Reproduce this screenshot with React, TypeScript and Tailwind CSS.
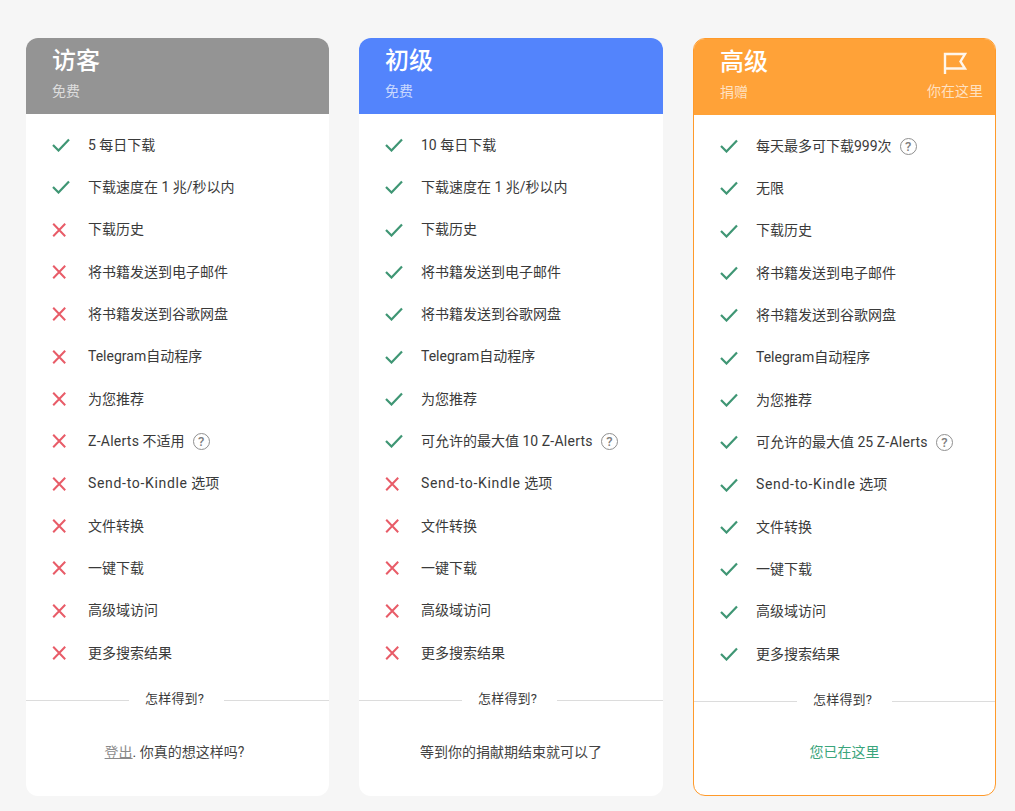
import type { ReactNode } from 'react';

type Row = { label: ReactNode; ok: boolean; help?: boolean };

const fontStack = "font-['Roboto','Noto_Sans_CJK_SC',sans-serif]";

function buildRows(first: string, second: string, alerts: Row, rest: boolean[], firstHelp = false): Row[] {
  return [
    { label: first, ok: true, help: firstHelp },
    { label: second, ok: true },
    { label: '下载历史', ok: rest[0] },
    { label: '将书籍发送到电子邮件', ok: rest[0] },
    { label: '将书籍发送到谷歌网盘', ok: rest[0] },
    { label: 'Telegram自动程序', ok: rest[0] },
    { label: '为您推荐', ok: rest[0] },
    alerts,
    {
      label: (
        <>
          <span className="tracking-[0.68px]">Send-to-Kindle</span> 选项
        </>
      ),
      ok: rest[1],
    },
    { label: '文件转换', ok: rest[1] },
    { label: '一键下载', ok: rest[1] },
    { label: '高级域访问', ok: rest[1] },
    { label: '更多搜索结果', ok: rest[1] },
  ];
}

const guestRows = buildRows(
  '5 每日下载',
  '下载速度在 1 兆/秒以内',
  {
    label: (
      <>
        <span className="tracking-[0.25px]">Z-Alerts</span> 不适用
      </>
    ),
    ok: false,
    help: true,
  },
  [false, false]
);
const basicRows = buildRows(
  '10 每日下载',
  '下载速度在 1 兆/秒以内',
  {
    label: (
      <>
        可允许的最大值 10 <span className="tracking-[0.25px]">Z-Alerts</span>
      </>
    ),
    ok: true,
    help: true,
  },
  [true, false]
);
const premiumRows = buildRows(
  '每天最多可下载999次',
  '无限',
  {
    label: (
      <>
        可允许的最大值 25 <span className="tracking-[0.25px]">Z-Alerts</span>
      </>
    ),
    ok: true,
    help: true,
  },
  [true, true],
  true
);

function CheckIcon() {
  return (
    <svg width="18" height="14" viewBox="0 0 18 14" fill="none" className="shrink-0">
      <path d="M1 7l5.5 5.5L17 1.5" stroke="#3f9674" strokeWidth="2.2" />
    </svg>
  );
}

function CrossIcon() {
  return (
    <svg width="18" height="14" viewBox="0 0 18 14" fill="none" className="shrink-0">
      <path d="M1.2 .8l12 12.4M13.2 .8l-12 12.4" stroke="#e85c68" strokeWidth="2" />
    </svg>
  );
}

function HelpIcon() {
  return (
    <span className="ml-[8px] flex h-[17px] w-[17px] shrink-0 items-center justify-center rounded-full border-[1.8px] border-[#8f8f8f] text-[13px] leading-none font-medium text-[#808080]">
      ?
    </span>
  );
}

function FlagIcon() {
  return (
    <svg width="24" height="23" viewBox="0 0 24 23" fill="none">
      <path d="M2 22V2h20l-4.5 7.5L22 16.5H2" stroke="#fff" strokeOpacity="0.9" strokeWidth="2.4" />
    </svg>
  );
}

function Plan({
  title,
  sub,
  rows,
  color,
  current,
  children,
}: {
  title: string;
  sub: string;
  rows: Row[];
  color: string;
  current?: boolean;
  children: ReactNode;
}) {
  return (
    <div
      className={
        current
          ? 'flex h-[758px] flex-col overflow-hidden rounded-[12px] border border-[#ff9a2a] bg-white'
          : 'flex h-[758px] flex-col overflow-hidden rounded-[12px] bg-white'
      }
    >
      <div className={`flex h-[76px] shrink-0 items-start justify-between pl-[26px] pr-[12px] ${color}`}>
        <div>
          <div className="mt-[6px] text-[24px] leading-[34px] font-medium text-white">{title}</div>
          <div className="mt-[3px] text-[14px] leading-[20px] text-white/70">{sub}</div>
        </div>
        {current && (
          <div className="flex flex-col items-end">
            <div className="mt-[13px] mr-[16px] h-[23px]">
              <FlagIcon />
            </div>
            <div className="mt-[6px] text-[14px] leading-[20px] text-white/70">你在这里</div>
          </div>
        )}
      </div>
      <ul className="pt-[10px]">
        {rows.map((row, i) => (
          <li key={i} className="flex h-[42.33px] items-center pl-[26px] text-[14px] text-[#3a3a3a]">
            {row.ok ? <CheckIcon /> : <CrossIcon />}
            <span className="ml-[18px] whitespace-nowrap">{row.label}</span>
            {row.help && <HelpIcon />}
          </li>
        ))}
      </ul>
      <div className="mt-[15px] flex items-center">
        <div className="h-px w-[103px] bg-[#dcdcdc]" />
        <div className="mr-[20px] ml-[16px] pb-[3px] text-[13px] leading-[20px] tracking-[0.2px] text-[#3a3a3a]">
          怎样得到?
        </div>
        <div className="h-px flex-1 bg-[#dcdcdc]" />
      </div>
      <div className="flex flex-1 items-center justify-center pb-[3px] text-[14px]">{children}</div>
    </div>
  );
}

export default function App() {
  return (
    <div className={`min-h-[811px] bg-[#f6f6f6] px-[26px] pt-[38px] ${fontStack}`}>
      <div className="grid w-[970px] grid-cols-[303px_304px_303px] gap-[30px]">
        <Plan title="访客" sub="免费" rows={guestRows} color="bg-[#949494]">
          <span className="mr-[6px] text-[#444]">
            <span className="text-[#8a8a8a] underline">登出</span>. 你真的想这样吗?
          </span>
        </Plan>
        <Plan title="初级" sub="免费" rows={basicRows} color="bg-[#5384fc]">
          <span className="text-[#444]">等到你的捐献期结束就可以了</span>
        </Plan>
        <Plan title="高级" sub="捐赠" rows={premiumRows} color="bg-[#ffa238]" current>
          <span className="text-[#3aa57c]">您已在这里</span>
        </Plan>
      </div>
    </div>
  );
}
